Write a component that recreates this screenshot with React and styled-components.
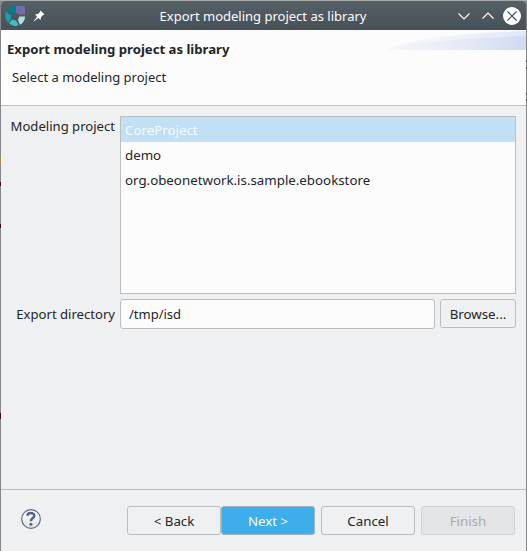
import React from 'react';
import styled, { createGlobalStyle, css } from 'styled-components';

const GlobalStyle = createGlobalStyle`
  * { box-sizing: border-box; }
  body {
    margin: 0;
    background: #85878a;
    font-family: "Noto Sans", sans-serif;
    font-size: 13.3px;
    line-height: 18px;
    color: #232629;
    overflow: hidden;
  }
`;

const Desktop = styled.div`
  width: 527px;
  height: 551px;
  padding: 1px 1px 0;
  background:
    linear-gradient(#48002a, #48002a) 0 182px / 1px 4px no-repeat,
    linear-gradient(#48002a, #48002a) 0 224px / 1px 4px no-repeat,
    linear-gradient(#48002a, #48002a) 0 413px / 1px 6px no-repeat,
    linear-gradient(#b08a3e, #b08a3e) 0 157px / 1px 6px no-repeat,
    linear-gradient(#a5a8a8, #a5a8a8) 0 0 / 527px 1px no-repeat,
    linear-gradient(#33383c, #33383c) 526px 60px / 1px 2px no-repeat,
    linear-gradient(#33383c, #33383c) 526px 67px / 1px 2px no-repeat,
    linear-gradient(#33383c, #33383c) 526px 93px / 1px 2px no-repeat,
    linear-gradient(#33383c, #33383c) 526px 99px / 1px 2px no-repeat,
    #85878a;
`;

const Dialog = styled.div`
  display: flex;
  flex-direction: column;
  height: 550px;
  background: #eff0f1;
  border-radius: 4px 4px 0 0;
  overflow: hidden;
`;

const TitleBar = styled.header`
  display: grid;
  grid-template-columns: 72px 1fr 72px;
  align-items: center;
  height: 29px;
  flex: none;
  padding: 0 5px 0 4px;
  background: linear-gradient(#566067, #475057);
  color: #fcfcfc;
`;

const TitleIcons = styled.div`
  display: flex;
  align-items: center;
  gap: 8px;
`;

const WindowTitle = styled.span`
  text-align: center;
  white-space: nowrap;
  font-size: 13px;
`;

const Controls = styled.div`
  display: flex;
  justify-content: flex-end;
  gap: 6px;
`;

const Banner = styled.section`
  position: relative;
  flex: none;
  height: 76px;
  padding: 10px 6px 0;
  background: #fcfcfc;
  border-bottom: 1px solid #bbbdbf;
`;

const BannerTitle = styled.h1`
  margin: 0 0 10px;
  font-size: 13.15px;
  line-height: 18px;
  font-weight: 700;
`;

const BannerText = styled.p`
  margin: 0 0 0 5px;
  font-size: 13px;
`;

const Swoosh = styled.svg`
  position: absolute;
  top: 0;
  right: 0;
`;

const Form = styled.main`
  flex: none;
  display: grid;
  grid-template-columns: 114px 315px 76px;
  grid-template-rows: 178px 30px;
  gap: 5px;
  height: 383px;
  padding: 10px 10px 0 0;
`;

const Label = styled.label`
  text-align: right;
  white-space: nowrap;
  font-size: 13.1px;
  padding-top: ${({ $top }) => $top}px;
`;

const ProjectList = styled.ul`
  grid-column: 2 / 4;
  margin: 0;
  padding: 0;
  list-style: none;
  background: #fcfcfc;
  border: 1px solid #bbbdbf;
`;

const ProjectRow = styled.li`
  height: 25px;
  padding: 4px 4px 0;
  ${({ $selected }) => $selected && css`
    background: #c1e0f5;
    color: #f4f9fd;
  `}
`;

const PathInput = styled.input`
  min-width: 0;
  width: 100%;
  height: 30px;
  padding: 0 8px;
  border: 1px solid #bbbdbf;
  border-radius: 3px;
  outline: none;
  background: #fcfcfc;
  font: inherit;
  font-size: 13px;
  color: inherit;
`;

const Button = styled.button`
  width: ${({ $width = 94 }) => $width}px;
  height: 29px;
  padding: 0;
  border: 1px solid #bbbdbf;
  border-radius: 3px;
  background: #eff0f1;
  font: inherit;
  color: #232629;
  ${({ $primary }) => $primary && css`
    background: #3daee9;
    border-color: #a3b1ba;
    color: #fcfcfc;
  `}
  &:disabled {
    background: #e3e5e6;
    border-color: #d0d2d4;
    color: #a8aaac;
  }
`;

const Footer = styled.footer`
  flex: 1;
  display: flex;
  align-items: flex-start;
  padding: 16px 11px 0 20px;
  border-top: 1px solid #bbbdbf;
`;

const Actions = styled.div`
  display: flex;
  gap: 6px;
  margin-left: auto;
`;

const StepButtons = styled.div`
  display: flex;
`;

const HelpIcon = styled.svg`
  margin-top: 3px;
`;

const AppLogo = () => (
  <svg width="20" height="20" viewBox="0 0 20 20">
    <path d="M2 4C4 1.5 7 0.2 10 0V7C8.7 7.2 7.7 7.6 6.8 8.2C4.7 7.3 3 5.9 2 4Z" fill="#007c8a" />
    <path d="M11 0H20V8.5H14C13.2 7.7 12.2 7.2 11 7Z" fill="#7869aa" />
    <path d="M1.3 5.4C2.4 7.1 4 8.3 6 9.2C5.5 10.6 5.6 11.8 6.2 13L3.2 16.4C0.2 13.5-.7 9.2 1.3 5.4Z" fill="#12a3b3" />
    <path d="M4 17.1L7.4 13.5C8.4 14.2 9.4 14.4 10.5 14.3C12 15.6 12.9 17.4 13.2 19.3C9.8 20.6 6.6 19.7 4 17.1Z" fill="#43bec4" />
    <path d="M13 13.2C13.7 12.4 14.2 11.5 14.3 10.5H20C20.1 14.1 18.2 17.2 14.9 18.8C14.3 16.8 13.1 15 13 13.2Z" fill="#b4dde3" />
  </svg>
);

const Pin = () => (
  <svg width="12" height="12" viewBox="0 0 12 12">
    <path d="M7.5 0.5L11.5 4.5L10 5L8 7.2L7.5 10L5.3 7.9L0.8 11.5L0.5 11.2L4.1 6.7L2 4.5L4.8 4L7 2Z" fill="#fff" />
  </svg>
);

const WindowControl = ({ kind }) => (
  <svg width="18" height="18" viewBox="0 0 18 18" fill="none" stroke="#fcfcfc" strokeWidth="1.2">
    {kind === 'minimize' && <path d="M3.5 6.5L9 12L14.5 6.5" />}
    {kind === 'maximize' && <path d="M3.5 11.5L9 6L14.5 11.5" />}
    {kind === 'close' && (
      <>
        <circle cx="9" cy="9" r="9" fill="#fcfcfc" stroke="none" />
        <path d="M4.5 4.5L13.5 13.5M13.5 4.5L4.5 13.5" stroke="#475057" />
      </>
    )}
  </svg>
);

const BannerSwoosh = () => (
  <Swoosh width="140" height="20" viewBox="0 0 140 20">
    <defs>
      <linearGradient id="swooshLight">
        <stop offset="0" stopColor="#f7f8fb" />
        <stop offset="0.5" stopColor="#f0f3f9" />
        <stop offset="1" stopColor="#dfe8f6" />
      </linearGradient>
      <linearGradient id="swooshBlue">
        <stop offset="0" stopColor="#f5f7fb" />
        <stop offset="0.55" stopColor="#e5eaf7" />
        <stop offset="1" stopColor="#d0daf3" />
      </linearGradient>
    </defs>
    <path d="M0 20C22 9 75 3 140 1V20Z" fill="url(#swooshLight)" />
    <path d="M0 20C28 12 80 8 140 6V20Z" fill="url(#swooshBlue)" />
  </Swoosh>
);

const Help = () => (
  <HelpIcon width="20" height="20" viewBox="0 0 21 21" fill="none">
    <defs>
      <linearGradient id="helpFill" x2="0" y2="1">
        <stop stopColor="#fff" />
        <stop offset="1" stopColor="#e2e2e2" />
      </linearGradient>
    </defs>
    <circle cx="10.5" cy="10.5" r="9.8" fill="url(#helpFill)" stroke="#566b8d" strokeWidth="1.2" />
    <path d="M6.8 7.2C6.8 3.4 14 3.3 14 7.1C14 9.5 10.4 9.6 10.4 12.8" stroke="#526588" strokeWidth="2.6" />
    <circle cx="10.4" cy="16" r="1.6" fill="#526588" />
  </HelpIcon>
);

const projects = ['CoreProject', 'demo', 'org.obeonetwork.is.sample.ebookstore'];

export default function App() {
  return (
    <>
      <GlobalStyle />
      <Desktop>
        <Dialog>
          <TitleBar>
            <TitleIcons><AppLogo /><Pin /></TitleIcons>
            <WindowTitle>Export modeling project as library</WindowTitle>
            <Controls>
              <WindowControl kind="minimize" />
              <WindowControl kind="maximize" />
              <WindowControl kind="close" />
            </Controls>
          </TitleBar>
          <Banner>
            <BannerTitle>Export modeling project as library</BannerTitle>
            <BannerText>Select a modeling project</BannerText>
            <BannerSwoosh />
          </Banner>
          <Form>
            <Label $top={1}>Modeling project</Label>
            <ProjectList>
              {projects.map((name, index) => (
                <ProjectRow key={name} $selected={index === 0}>{name}</ProjectRow>
              ))}
            </ProjectList>
            <Label $top={6} htmlFor="directory">Export directory</Label>
            <PathInput id="directory" defaultValue="/tmp/isd" />
            <Button $width={76}>Browse...</Button>
          </Form>
          <Footer>
            <Help />
            <Actions>
              <StepButtons>
                <Button>&lt; Back</Button>
                <Button $primary>Next &gt;</Button>
              </StepButtons>
              <Button>Cancel</Button>
              <Button disabled>Finish</Button>
            </Actions>
          </Footer>
        </Dialog>
      </Desktop>
    </>
  );
}
